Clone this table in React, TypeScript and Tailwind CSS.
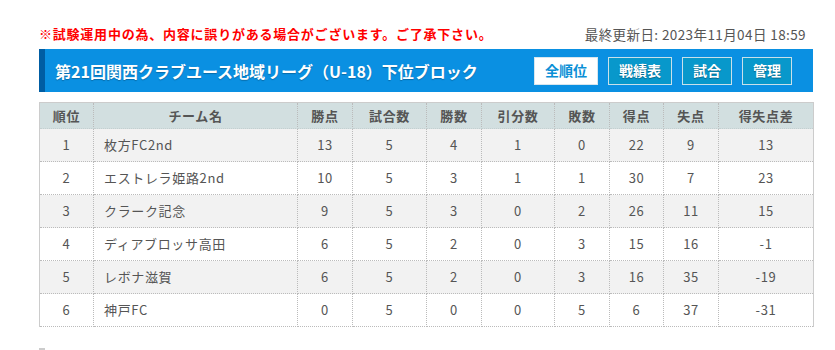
import React from "react";

const rows = [
  { rank: 1, team: "枚方FC2nd", pts: 13, played: 5, w: 4, d: 1, l: 0, gf: 22, ga: 9, gd: "13" },
  { rank: 2, team: "エストレラ姫路2nd", pts: 10, played: 5, w: 3, d: 1, l: 1, gf: 30, ga: 7, gd: "23" },
  { rank: 3, team: "クラーク記念", pts: 9, played: 5, w: 3, d: 0, l: 2, gf: 26, ga: 11, gd: "15" },
  { rank: 4, team: "ディアブロッサ高田", pts: 6, played: 5, w: 2, d: 0, l: 3, gf: 15, ga: 16, gd: "-1" },
  { rank: 5, team: "レボナ滋賀", pts: 6, played: 5, w: 2, d: 0, l: 3, gf: 16, ga: 35, gd: "-19" },
  { rank: 6, team: "神戸FC", pts: 0, played: 5, w: 0, d: 0, l: 5, gf: 6, ga: 37, gd: "-31" },
];

const cols = [
  { label: "順位", w: "w-[54px]" },
  { label: "チーム名", w: "w-[204px]" },
  { label: "勝点", w: "w-[55px]" },
  { label: "試合数", w: "w-[74px]" },
  { label: "勝数", w: "w-[55px]" },
  { label: "引分数", w: "w-[73px]" },
  { label: "敗数", w: "w-[55px]" },
  { label: "得点", w: "w-[54px]" },
  { label: "失点", w: "w-[55px]" },
  { label: "得失点差", w: "w-[95px]" },
];

const buttons = ["戦績表", "試合", "管理"];

export default function App() {
  const td = "border border-dotted border-[#bbb] text-center";
  return (
    <div
      className="min-h-[350px] bg-white pl-[39px] text-[13px] tracking-[0.05em] text-[#555]"
      style={{ fontFamily: '"Noto Sans CJK JP", "Noto Sans", sans-serif' }}
    >
      {/* notice + last updated */}
      <div className="flex w-[774px] items-center justify-between pt-[24px] pb-[5px] leading-[20px]">
        <p className="font-bold tracking-[0.06em] text-[#f00]">※試験運用中の為、内容に誤りがある場合がございます。ご了承下さい。</p>
        <p className="pr-[7px] text-[13.5px] tracking-[0.03em] text-[#555]">最終更新日: 2023年11月04日 18:59</p>
      </div>

      {/* league header */}
      <div className="flex h-[43px] w-[774px] items-center justify-between border-l-[6px] border-[#005da3] bg-[#0a90e2] pl-[10px] pr-[21px]">
        <h1 className="text-[16px] font-bold tracking-normal text-white [text-shadow:0_1px_1px_rgba(0,0,0,0.25)]">
          第21回関西クラブユース地域リーグ（U-18）下位ブロック
        </h1>
        <div className="flex gap-[10px]">
          <button className="h-[28px] border border-[#d7e6ee] bg-white px-[10px] text-[14px] font-bold tracking-normal text-[#0a8fd6]">
            全順位
          </button>
          {buttons.map((b) => (
            <button
              key={b}
              className="h-[28px] border border-[#c9e0ea] bg-[#0898cb] px-[10px] text-[14px] font-bold tracking-normal text-white [text-shadow:0_1px_1px_rgba(0,0,0,0.35)]"
            >
              {b}
            </button>
          ))}
        </div>
      </div>

      {/* standings */}
      <table className="mt-[10px] w-[774px] table-fixed border-collapse border-t border-r border-l border-[#ccc]">
        <thead>
          <tr className="h-[26px] bg-[#d2dfe0]">
            {cols.map((c) => (
              <th key={c.label} className={`${c.w} border-x border-dotted border-[#bbb] border-b border-b-solid border-b-[#c4cfd0] text-center font-bold text-[#555]`}>
                {c.label}
              </th>
            ))}
          </tr>
        </thead>
        <tbody>
          {rows.map((r, i) => (
            <tr key={r.rank} className={`h-[33px] ${i % 2 === 0 ? "bg-[#f2f2f2]" : "bg-white"}`}>
              <td className={td}>{r.rank}</td>
              <td className="border border-dotted border-[#bbb] pl-[10px] text-left">{r.team}</td>
              <td className={td}>{r.pts}</td>
              <td className={td}>{r.played}</td>
              <td className={td}>{r.w}</td>
              <td className={td}>{r.d}</td>
              <td className={td}>{r.l}</td>
              <td className={td}>{r.gf}</td>
              <td className={td}>{r.ga}</td>
              <td className={td}>{r.gd}</td>
            </tr>
          ))}
        </tbody>
      </table>

      <div className="mt-[21px] h-[4px] w-[6px] bg-[#ccc]" />
    </div>
  );
}
